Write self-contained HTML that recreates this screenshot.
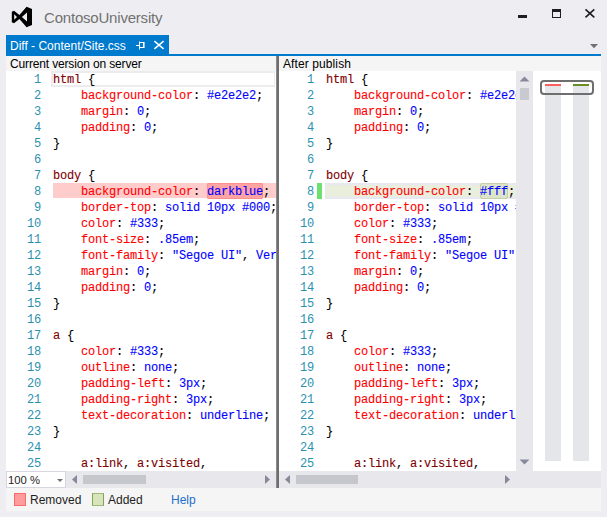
<!DOCTYPE html>
<html><head><meta charset="utf-8">
<style>
*{margin:0;padding:0;box-sizing:border-box}
html,body{width:607px;height:517px;overflow:hidden;background:#eeeef2;font-family:"Liberation Sans",sans-serif}
.abs{position:absolute}
.ui{font-family:"Liberation Sans",sans-serif;white-space:pre}
.code{position:absolute;font-family:"Liberation Mono",monospace;font-size:12px;letter-spacing:-0.2px;line-height:16px;white-space:pre;color:#000;-webkit-text-stroke:0.1px}
.nums{position:absolute;font-family:"Liberation Mono",monospace;font-size:12px;letter-spacing:-0.2px;line-height:16px;white-space:pre;color:#2b91af;text-align:right}
</style></head><body>
<!-- title bar -->
<svg class="abs" style="left:0;top:0" width="40" height="30" viewBox="0 0 40 30">
  <path d="M26.6 6.8 L32 9 L32 25 L26.6 27.2 L19.4 19.1 L14 23.3 L11.8 22.2 L11.8 11.8 L14 10.7 L19.4 14.9 Z M27 12.6 L27 21.4 L21.9 17 Z M14.2 14.2 L14.2 19.8 L17 17 Z" fill="#000" fill-rule="evenodd"/>
</svg>
<div class="abs ui" style="left:44px;top:9px;font-size:15px;letter-spacing:-0.2px;color:#717171">ContosoUniversity</div>
<div class="abs" style="left:518px;top:15px;width:9px;height:3px;background:#1e1e1e"></div>
<div class="abs" style="left:552px;top:9px;width:9px;height:9px;border:1px solid #1e1e1e;border-top-width:3px"></div>
<svg class="abs" style="left:584px;top:8px" width="12" height="11" viewBox="0 0 12 11"><path d="M1.5 1.3 L10.3 9.4 M10.3 1.3 L1.5 9.4" stroke="#1e1e1e" stroke-width="1.6"/></svg>
<!-- tab -->
<div class="abs" style="left:6px;top:35px;width:163px;height:19px;background:#007acc"></div>
<div class="abs ui" style="left:10px;top:39px;font-size:12px;color:#fff">Diff - Content/Site.css</div>
<svg class="abs" style="left:136px;top:41px" width="11" height="9" viewBox="0 0 11 9"><path d="M0 4.5 H3 M3.5 0.5 V8.5 M3.5 1.5 H7.5 M3.5 6.5 H7.5" stroke="#fff" stroke-width="1" fill="none"/><rect x="7" y="1" width="1.6" height="6" fill="#fff"/></svg>
<svg class="abs" style="left:153px;top:40px" width="12" height="10" viewBox="0 0 12 10"><path d="M1.4 1.2 L10.6 8.8 M10.6 1.2 L1.4 8.8" stroke="#fff" stroke-width="1.5"/></svg>
<div class="abs" style="left:6px;top:54px;width:595px;height:2px;background:#007acc"></div>
<svg class="abs" style="left:590px;top:44px" width="8" height="5" viewBox="0 0 8 5"><path d="M0 0 H8 L4 4.3 Z" fill="#717171"/></svg>
<!-- headers -->
<div class="abs" style="left:6px;top:56px;width:270px;height:15px;background:#f5f5f5"></div>
<div class="abs" style="left:279px;top:56px;width:322px;height:15px;background:#f5f5f5"></div>
<div class="abs ui" style="left:10px;top:57px;font-size:12px;letter-spacing:-0.15px;color:#000">Current version on server</div>
<div class="abs ui" style="left:283px;top:57px;font-size:12px;letter-spacing:0.1px;color:#000">After publish</div>
<!-- left code area -->
<div class="abs" style="left:6px;top:71px;width:270px;height:400px;background:#fff;overflow:hidden">
  <div class="abs" style="left:45px;top:0;width:224px;height:16px;border:2px solid #ececef;border-right-width:1px"></div>
  <div class="abs" style="left:47px;top:112px;width:223px;height:15px;background:#ffcccc"></div>
  <div class="abs" style="left:201px;top:112px;width:56px;height:16px;background:#ffa3a3;border:1px solid #ff8f8f;border-radius:1px"></div>
  <div class="nums" style="left:0;top:1px;width:35px">1
2
3
4
5
6
7
8
9
10
11
12
13
14
15
16
17
18
19
20
21
22
23
24
25</div>
  <div class="code" style="left:47px;top:1px"><span style="color:#800000">html</span> {
    <span style="color:#ff0000">background-color</span>: <span style="color:#0000ff">#e2e2e2</span>;
    <span style="color:#ff0000">margin</span>: <span style="color:#0000ff">0</span>;
    <span style="color:#ff0000">padding</span>: <span style="color:#0000ff">0</span>;
}

<span style="color:#800000">body</span> {
    <span style="color:#ff0000">background-color</span>: <span style="color:#0000ff">darkblue</span>;
    <span style="color:#ff0000">border-top</span>: <span style="color:#0000ff">solid 10px #000</span>;
    <span style="color:#ff0000">color</span>: <span style="color:#0000ff">#333</span>;
    <span style="color:#ff0000">font-size</span>: <span style="color:#0000ff">.85em</span>;
    <span style="color:#ff0000">font-family</span>: <span style="color:#0000ff">"Segoe UI"</span>, <span style="color:#0000ff">Verdana</span>, <span style="color:#0000ff">Helvetica</span>, <span style="color:#0000ff">Sans-Serif</span>;
    <span style="color:#ff0000">margin</span>: <span style="color:#0000ff">0</span>;
    <span style="color:#ff0000">padding</span>: <span style="color:#0000ff">0</span>;
}

<span style="color:#800000">a</span> {
    <span style="color:#ff0000">color</span>: <span style="color:#0000ff">#333</span>;
    <span style="color:#ff0000">outline</span>: <span style="color:#0000ff">none</span>;
    <span style="color:#ff0000">padding-left</span>: <span style="color:#0000ff">3px</span>;
    <span style="color:#ff0000">padding-right</span>: <span style="color:#0000ff">3px</span>;
    <span style="color:#ff0000">text-decoration</span>: <span style="color:#0000ff">underline</span>;
}

    <span style="color:#800000">a:link</span>, <span style="color:#800000">a:visited</span>,</div>
</div>
<div class="abs" style="left:276px;top:56px;width:3px;height:432px;background:#6e6e6e;border-left:1px solid #8a8a8a;z-index:5"></div>
<!-- right code area -->
<div class="abs" style="left:279px;top:71px;width:237px;height:400px;background:#fff;overflow:hidden">
  <div class="abs" style="left:38px;top:112px;width:5px;height:16px;background:#6ee06e"></div>
  <div class="abs" style="left:46px;top:112px;width:200px;height:16px;background:#eaeedc;border:2px solid #e7e8f1;border-left-width:1px"></div>
  <div class="abs" style="left:201px;top:112px;width:28px;height:16px;background:#dce5c8;border:1px solid #c3d0a8;border-radius:2px"></div>
  <div class="nums" style="left:0;top:1px;width:35px">1
2
3
4
5
6
7
8
9
10
11
12
13
14
15
16
17
18
19
20
21
22
23
24
25</div>
  <div class="code" style="left:47px;top:1px"><span style="color:#800000">html</span> {
    <span style="color:#ff0000">background-color</span>: <span style="color:#0000ff">#e2e2e2</span>;
    <span style="color:#ff0000">margin</span>: <span style="color:#0000ff">0</span>;
    <span style="color:#ff0000">padding</span>: <span style="color:#0000ff">0</span>;
}

<span style="color:#800000">body</span> {
    <span style="color:#ff0000">background-color</span>: <span style="color:#0000ff">#fff</span>;
    <span style="color:#ff0000">border-top</span>: <span style="color:#0000ff">solid 10px #000</span>;
    <span style="color:#ff0000">color</span>: <span style="color:#0000ff">#333</span>;
    <span style="color:#ff0000">font-size</span>: <span style="color:#0000ff">.85em</span>;
    <span style="color:#ff0000">font-family</span>: <span style="color:#0000ff">"Segoe UI"</span>, <span style="color:#0000ff">Verdana</span>, <span style="color:#0000ff">Helvetica</span>, <span style="color:#0000ff">Sans-Serif</span>;
    <span style="color:#ff0000">margin</span>: <span style="color:#0000ff">0</span>;
    <span style="color:#ff0000">padding</span>: <span style="color:#0000ff">0</span>;
}

<span style="color:#800000">a</span> {
    <span style="color:#ff0000">color</span>: <span style="color:#0000ff">#333</span>;
    <span style="color:#ff0000">outline</span>: <span style="color:#0000ff">none</span>;
    <span style="color:#ff0000">padding-left</span>: <span style="color:#0000ff">3px</span>;
    <span style="color:#ff0000">padding-right</span>: <span style="color:#0000ff">3px</span>;
    <span style="color:#ff0000">text-decoration</span>: <span style="color:#0000ff">underline</span>;
}

    <span style="color:#800000">a:link</span>, <span style="color:#800000">a:visited</span>,</div>
</div>
<!-- vertical scrollbar -->
<div class="abs" style="left:516px;top:71px;width:17px;height:400px;background:#e8e8ec"></div>
<svg class="abs" style="left:519px;top:76px" width="11" height="6" viewBox="0 0 11 6"><path d="M0.5 5.5 H10.5 L5.5 0.5 Z" fill="#868999"/></svg>
<div class="abs" style="left:520px;top:88px;width:9px;height:12px;background:#c9cacf"></div>
<svg class="abs" style="left:519px;top:459px" width="11" height="6" viewBox="0 0 11 6"><path d="M0.5 0.5 H10.5 L5.5 5.5 Z" fill="#868999"/></svg>
<!-- overview margin -->
<div class="abs" style="left:533px;top:71px;width:68px;height:400px;background:#fff"></div>
<div class="abs" style="left:545px;top:84px;width:16px;height:377px;background:#e5e6e9"></div>
<div class="abs" style="left:573px;top:84px;width:16px;height:377px;background:#e5e6e9"></div>
<div class="abs" style="left:545px;top:84px;width:16px;height:2px;background:#fa5e5e"></div>
<div class="abs" style="left:573px;top:84px;width:16px;height:2px;background:#6b8e23"></div>
<div class="abs" style="left:540px;top:80px;width:54px;height:15px;border:2px solid #6e6e6e;border-radius:4px"></div>
<!-- horizontal scroll row -->
<div class="abs" style="left:6px;top:471px;width:595px;height:17px;background:#e8e8ec"></div>
<div class="abs" style="left:6px;top:471px;width:60px;height:17px;background:#fff;border:1px solid #d6d7de"></div>
<div class="abs ui" style="left:8px;top:474px;font-size:11.3px;color:#1e1e1e">100 %</div>
<svg class="abs" style="left:57px;top:479px" width="6" height="3" viewBox="0 0 6 3"><path d="M0 0 H6 L3 3 Z" fill="#717171"/></svg>
<svg class="abs" style="left:72px;top:475px" width="5" height="9" viewBox="0 0 5 9"><path d="M5 0 V9 L0 4.5 Z" fill="#868999"/></svg>
<div class="abs" style="left:83px;top:475px;width:63px;height:9px;background:#c6c7cc"></div>
<svg class="abs" style="left:265px;top:475px" width="5" height="9" viewBox="0 0 5 9"><path d="M0 0 V9 L5 4.5 Z" fill="#868999"/></svg>
<svg class="abs" style="left:285px;top:475px" width="5" height="9" viewBox="0 0 5 9"><path d="M5 0 V9 L0 4.5 Z" fill="#868999"/></svg>
<div class="abs" style="left:296px;top:475px;width:62px;height:9px;background:#c6c7cc"></div>
<svg class="abs" style="left:505px;top:475px" width="5" height="9" viewBox="0 0 5 9"><path d="M0 0 V9 L5 4.5 Z" fill="#868999"/></svg>
<!-- status bar -->
<div class="abs" style="left:6px;top:488px;width:595px;height:23px;background:#f5f5f5"></div>
<div class="abs" style="left:14px;top:493px;width:12px;height:13px;background:#ff9c9c;border:1px solid #ff6a6a"></div>
<div class="abs ui" style="left:30px;top:493px;font-size:12px;color:#1e1e1e">Removed</div>
<div class="abs" style="left:92px;top:493px;width:12px;height:13px;background:#d8e4bc;border:1px solid #84a554;border-top-color:#a0b878;border-bottom-color:#a0b878"></div>
<div class="abs ui" style="left:108px;top:493px;font-size:12px;color:#1e1e1e">Added</div>
<div class="abs ui" style="left:171px;top:493px;font-size:12px;color:#1e6fc9">Help</div>
</body></html>
